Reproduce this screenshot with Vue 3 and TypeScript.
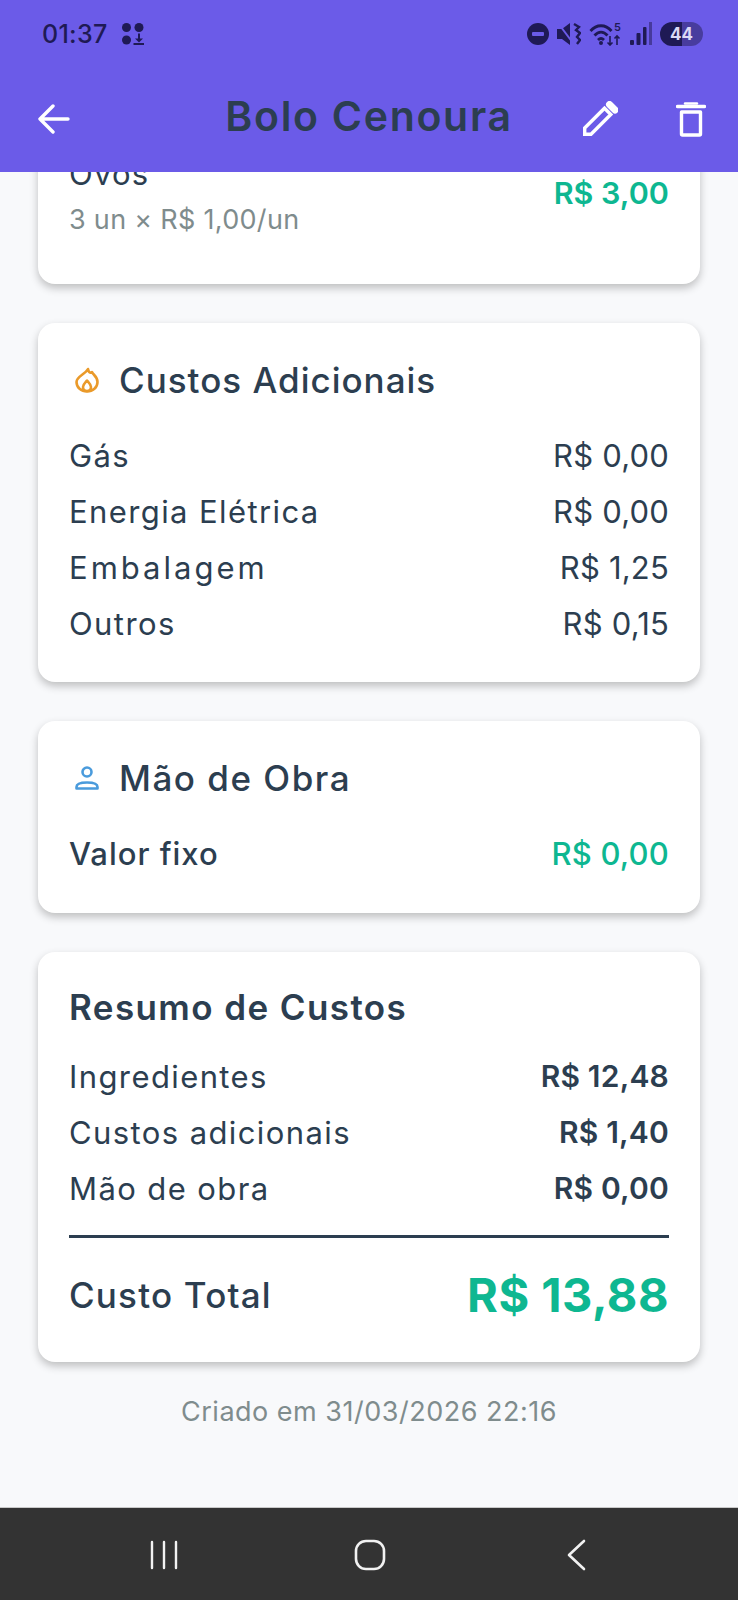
<script setup lang="ts">
interface Row {
  label: string;
  value: string;
  wide?: boolean;
}

const adicionais: Row[] = [
  { label: "Gás", value: "R$ 0,00" },
  { label: "Energia Elétrica", value: "R$ 0,00" },
  { label: "Embalagem", value: "R$ 1,25", wide: true },
  { label: "Outros", value: "R$ 0,15" },
];

const resumo: Row[] = [
  { label: "Ingredientes", value: "R$ 12,48" },
  { label: "Custos adicionais", value: "R$ 1,40" },
  { label: "Mão de obra", value: "R$ 0,00" },
];
</script>

<template>
  <div class="screen">
    <header class="appbar">
      <div class="status">
        <div class="status-left">
          <span class="time">01:37</span>
          <svg width="22" height="22" viewBox="0 0 22 22" fill="#1f1a55">
            <circle cx="4.500" cy="4.500" r="4.500" />
            <circle cx="17" cy="4.500" r="4.500" />
            <circle cx="4.500" cy="17" r="4.500" />
            <path d="M16 10.500h2v5h3l-4 4-4-4h3zM11.500 20h11v2h-11z" />
          </svg>
        </div>
        <div class="status-right">
          <svg width="22" height="22" viewBox="0 0 22 22">
            <circle cx="11" cy="11" r="11" fill="#1f1a55" />
            <rect x="5" y="9" width="12" height="4" rx="1" fill="#6b5be8" />
          </svg>
          <svg width="24" height="24" viewBox="0 0 24 24" fill="#1f1a55">
            <path d="M0 7h5l8-6v22l-8-6H0z" />
            <path d="M1 1l15 20" stroke="#6b5be8" stroke-width="2" />
            <path d="M17 2l5 3-3 3 4 3-3 4 3 3-3 4" fill="none" stroke="#1f1a55" stroke-width="2.400" />
          </svg>
          <svg class="wifi" width="33" height="28" viewBox="0 -4 33 28" fill="none" stroke="#1f1a55" stroke-width="2.800">
            <path d="M1.500 9c6-7 15-7 21 0M5.500 13.500c4-4.500 9-4.500 13 0M9 18c2-2 4-2 6 0" />
            <circle cx="12" cy="21" r="2" fill="#1f1a55" stroke="none" />
            <path d="M21 14v9M18.500 20.500l2.500 2.500 2.500-2.500M28 23v-9M25.500 16.500l2.500-2.500 2.500 2.500" stroke-width="1.600" />
            <text x="25" y="9" fill="#1f1a55" stroke="none" font-size="11" font-weight="600" font-family="Inter, sans-serif">5</text>
          </svg>
          <svg width="22" height="24" viewBox="0 0 22 24" fill="#1f1a55">
            <rect x="0" y="18" width="4" height="5" rx="1" />
            <rect x="6.500" y="11" width="4" height="12" rx="1" />
            <rect x="13" y="5" width="3.500" height="18" rx="1" />
            <rect x="19" y="0" width="3" height="23" fill="#46399c" />
          </svg>
          <div class="battery"><span>44</span></div>
        </div>
      </div>
      <div class="toolbar">
        <svg class="back" width="32" height="30" viewBox="0 0 32 30" fill="none" stroke="#fff" stroke-width="3.400" stroke-linecap="round" stroke-linejoin="round">
          <path d="M2 15h28M15 2L2 15l13 13" />
        </svg>
        <h1 class="title">Bolo Cenoura</h1>
        <svg class="edit" width="36" height="36" viewBox="0 0 36 36" fill="none" stroke="#fff" stroke-width="3.400" stroke-linejoin="miter">
          <path d="M2.700 33.300v-6.300L22.500 7.200l6.300 6.300L9 33.300z" />
          <path d="M27.500 3.500l5.500 5.500" stroke-width="7" stroke-linecap="round" />
        </svg>
        <svg class="trash" width="30" height="36" viewBox="0 0 30 36" fill="none" stroke="#fff" stroke-width="3.400" stroke-linejoin="round">
          <path d="M5.500 11h19v22a1 1 0 0 1-1 1h-17a1 1 0 0 1-1-1z" />
          <path d="M1.500 5.500h27" stroke-linecap="round" />
          <path d="M9 2.500h12" stroke-width="2.400" stroke-linecap="round" />
        </svg>
      </div>
    </header>

    <main class="content">
      <div class="scroller">
        <section class="card first">
          <div class="ingredient">
            <div>
              <div class="ing-name">Ovos</div>
              <div class="ing-detail">3 un × R$ 1,00/un</div>
            </div>
            <div class="ing-value">R$ 3,00</div>
          </div>
        </section>

        <section class="card">
          <div class="card-title">
            <svg width="24" height="26" viewBox="0 0 24 26" fill="none" stroke="#ea9a2a" stroke-width="2.600" stroke-linejoin="round">
              <path d="M13 2c.5 3 2 4.500 4 3 .4 1 .8 1.500 1.800 2.500C21 9.800 22.500 12.500 22.500 15c0 5.500-4.700 9.500-10.500 9.500S1.500 20.500 1.500 15C1.500 9.500 10 7.500 13 2z" />
              <path d="M12 13.500c1.500 2 4 3.500 4 6.500a4 4 0 0 1-8 0c0-3 2.500-4.500 4-6.500z" />
            </svg>
            <h2>Custos Adicionais</h2>
          </div>
          <div v-for="r in adicionais" :key="r.label" class="row">
            <span class="label" :class="{ wide: r.wide }">{{ r.label }}</span>
            <span class="value">{{ r.value }}</span>
          </div>
        </section>

        <section class="card labor">
          <div class="card-title">
            <svg width="24" height="24" viewBox="0 0 24 24" fill="none" stroke="#4a9bdc" stroke-width="2.600" stroke-linejoin="round">
              <circle cx="12" cy="6" r="4.500" />
              <path d="M1.500 22.500v-1.500c0-3 5-4.500 10.500-4.500S22.500 18 22.500 21v1.500z" />
            </svg>
            <h2>Mão de Obra</h2>
          </div>
          <div class="row strong">
            <span class="label">Valor fixo</span>
            <span class="value green">R$ 0,00</span>
          </div>
        </section>

        <section class="card summary">
          <h2 class="summary-title">Resumo de Custos</h2>
          <div v-for="r in resumo" :key="r.label" class="row">
            <span class="label">{{ r.label }}</span>
            <span class="value bold">{{ r.value }}</span>
          </div>
          <div class="total">
            <span class="total-label">Custo Total</span>
            <span class="total-value">R$ 13,88</span>
          </div>
        </section>

        <p class="created">Criado em 31/03/2026 22:16</p>
      </div>
    </main>

    <nav class="navbar">
      <svg width="28" height="30" viewBox="0 0 28 30" stroke="#f2f2f2" stroke-width="2.400" stroke-linecap="round">
        <path d="M2 2v26M14 2v26M26 2v26" />
      </svg>
      <svg class="home" width="32" height="32" viewBox="0 0 32 32" fill="none" stroke="#f2f2f2" stroke-width="2.600">
        <rect x="2" y="2" width="28" height="28" rx="10" />
      </svg>
      <svg width="20" height="32" viewBox="0 0 20 32" fill="none" stroke="#f2f2f2" stroke-width="2.600" stroke-linecap="round" stroke-linejoin="round">
        <path d="M18 2L3 16l15 14" />
      </svg>
    </nav>
  </div>
</template>

<style>
html,
body {
  background: #f8f9fb;
}
</style>

<style scoped>
.screen {
  width: 738px;
  height: 1600px;
  display: flex;
  flex-direction: column;
  overflow: hidden;
  font-family: Inter, "Noto Sans", sans-serif;
  color: #2c3e50;
  background: #f8f9fb;
}
.appbar {
  height: 172px;
  flex: none;
  background: #6b5be8;
  position: relative;
  z-index: 2;
}
.status {
  height: 68px;
  padding: 0 35px 0 42px;
  box-sizing: border-box;
  display: flex;
  justify-content: space-between;
  align-items: center;
}
.status-left,
.status-right {
  display: flex;
  align-items: center;
}
.status-left {
  gap: 14px;
}
.status-right {
  gap: 8px;
}
.wifi {
  margin-top: -4px;
}
.time {
  font-size: 25px;
  font-weight: 500;
  letter-spacing: 0.3px;
  color: #1f1a55;
}
.battery {
  width: 43px;
  height: 24px;
  border-radius: 12px;
  background: linear-gradient(90deg, #1f1a55 0 50%, #483c9e 50% 100%);
  color: #dcd9f5;
  font-size: 17px;
  font-weight: 700;
  display: flex;
  align-items: center;
  justify-content: center;
}
.toolbar {
  height: 104px;
  display: flex;
  align-items: center;
  padding: 0 32px 0 38px;
  position: relative;
}
.toolbar svg {
  flex: none;
}
.title {
  position: absolute;
  left: 0;
  right: 0;
  margin: 0 0 8px;
  text-align: center;
  font-size: 41px;
  font-weight: 600;
  letter-spacing: 1.7px;
  color: #2c3e50;
}
.back {
  margin-top: -2px;
}
.edit {
  margin-left: auto;
  margin-top: -2px;
}
.trash {
  margin-left: 58px;
  margin-top: -2px;
}
.content {
  flex: 1;
  overflow: hidden;
}
.scroller {
  margin-top: -59px;
  padding: 0 38px;
}
.card {
  background: #fff;
  border-radius: 17px;
  padding: 32px 31px 31px;
  margin-bottom: 39px;
  box-shadow: 0 4px 8px rgba(0, 0, 0, 0.24);
}
.card.first {
  height: 171px;
  box-sizing: border-box;
  padding-top: 41px;
}
.ingredient {
  display: flex;
  justify-content: space-between;
}
.ing-name {
  font-size: 31px;
  line-height: 40px;
  letter-spacing: 1.2px;
}
.ing-detail {
  font-size: 27px;
  line-height: 38px;
  letter-spacing: 0.3px;
  color: #7f8c8d;
  margin-top: 7px;
}
.ing-value {
  font-size: 30.5px;
  font-weight: 600;
  color: #0eb791;
  margin-top: 20px;
}
.card-title {
  display: flex;
  align-items: center;
  gap: 20px;
  height: 50px;
  margin: 0 0 22px 6px;
}
.card-title h2,
.summary-title {
  margin: 0;
  font-size: 35px;
  font-weight: 500;
  letter-spacing: 1px;
  color: #2c3e50;
}
.labor h2 {
  letter-spacing: 1.5px;
}
.row {
  height: 56px;
  display: flex;
  justify-content: space-between;
  align-items: center;
  font-size: 31px;
  color: #2c3e50;
}
.label {
  letter-spacing: 1.4px;
}
.label.wide {
  letter-spacing: 3px;
}
.value {
  letter-spacing: 0.2px;
}
.row.strong {
  font-weight: 500;
}
.row.strong .label {
  letter-spacing: 1px;
}
.labor {
  padding-bottom: 32px;
}
.green {
  color: #0eb791;
}
.bold {
  font-size: 30px;
  font-weight: 600;
  letter-spacing: 0.2px;
}
.summary-title {
  font-weight: 600;
  line-height: 44px;
  letter-spacing: 1.4px;
  margin: 1px 0 19px;
}
.total {
  margin-top: 19px;
  border-top: 3px solid #2c3e50;
  padding-top: 20px;
  display: flex;
  justify-content: space-between;
  align-items: center;
  height: 96px;
  box-sizing: border-box;
}
.total-label {
  font-size: 35px;
  font-weight: 500;
  letter-spacing: 1.2px;
}
.total-value {
  font-size: 47px;
  font-weight: 700;
  letter-spacing: 0.5px;
  color: #0eb791;
}
.created {
  margin: 0;
  text-align: center;
  font-size: 27px;
  letter-spacing: 0.5px;
  color: #7f8c8d;
  margin-top: -6px;
}
.navbar {
  height: 93px;
  flex: none;
  background: #333;
  border-top: 1px solid #c9c9c9;
  box-sizing: border-box;
  display: flex;
  align-items: center;
  justify-content: space-between;
  padding: 2px 152px 0 150px;
}
.home {
  margin-right: 4px;
}
</style>
